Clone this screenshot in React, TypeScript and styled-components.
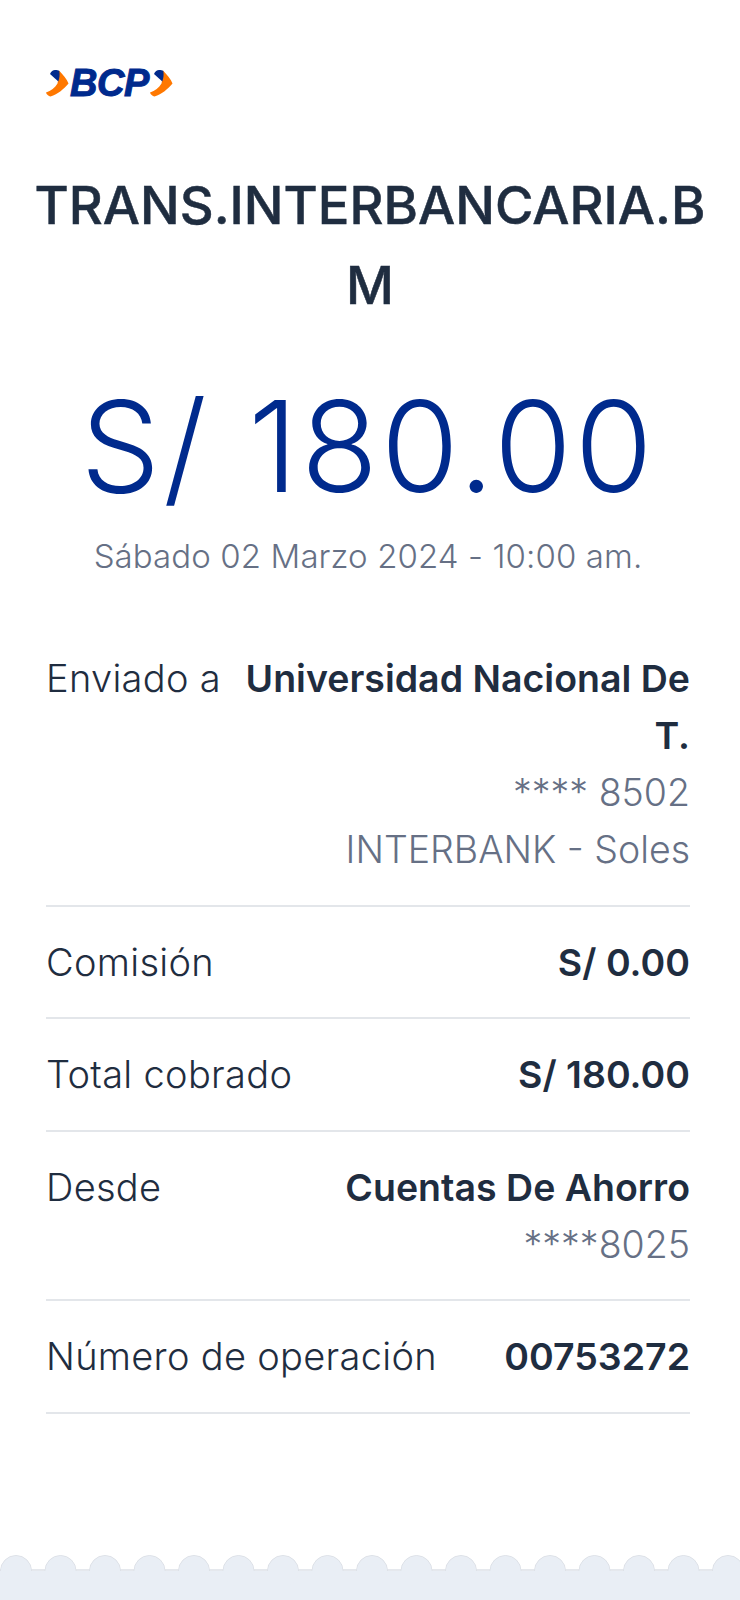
import React from 'react';
import styled, { createGlobalStyle } from 'styled-components';

const colors = {
  ink: '#1f2d40',
  muted: '#667085',
  blue: '#002a8d',
  orange: '#ff7800',
  line: '#e3e6ea',
  band: '#e9eef5',
  bandEdge: '#dde1e7',
};

const GlobalStyle = createGlobalStyle`
  html, body {
    margin: 0;
    padding: 0;
    background: #fff;
  }
  body {
    font-family: Inter, "Noto Sans", sans-serif;
  }
`;

const Page = styled.main`
  width: 740px;
  height: 1600px;
  display: flex;
  flex-direction: column;
  background: #fff;
  overflow: hidden;
`;

const Content = styled.div`
  flex: 1;
  display: flex;
  flex-direction: column;
  padding: 62px 50px 0 46px;
`;

const LogoRow = styled.div`
  display: flex;
  align-items: center;
  gap: 1px;
  height: 42px;
`;

const LogoText = styled.span`
  font-family: "Liberation Sans", sans-serif;
  font-size: 38px;
  font-weight: 700;
  font-style: italic;
  line-height: 42px;
  letter-spacing: -0.5px;
  color: ${colors.blue};
  -webkit-text-stroke: 1px ${colors.blue};
`;

const Title = styled.h1`
  margin: 61px -24px 0 -20px;
  font-size: 52.5px;
  font-weight: 500;
  line-height: 80px;
  text-align: center;
  color: ${colors.ink};
  -webkit-text-stroke: 0.5px ${colors.ink};
  overflow-wrap: anywhere;
`;

const Amount = styled.div`
  margin-top: 46px;
  font-size: 126px;
  font-weight: 300;
  line-height: 150px;
  letter-spacing: 3px;
  text-align: center;
  white-space: nowrap;
  color: ${colors.blue};
`;

const DateLine = styled.div`
  margin-top: 12px;
  font-size: 33px;
  font-weight: 300;
  line-height: 46px;
  letter-spacing: 0.1px;
  text-align: center;
  color: ${colors.muted};
`;

const Details = styled.section`
  margin-top: 44px;
  display: flex;
  flex-direction: column;
`;

const Row = styled.div`
  display: flex;
  justify-content: space-between;
  gap: 22px;
  padding: 27px 0 26.5px;
  border-bottom: 2px solid ${colors.line};
`;

const Label = styled.span`
  flex-shrink: 0;
  font-size: 38px;
  font-weight: 300;
  line-height: 57px;
  letter-spacing: 0.3px;
  color: ${colors.ink};
`;

const Values = styled.div`
  display: flex;
  flex-direction: column;
  text-align: right;
`;

const Strong = styled.span`
  font-size: 37.5px;
  font-weight: 600;
  line-height: 57px;
  color: ${colors.ink};
`;

const Sub = styled.span`
  font-size: 37.5px;
  font-weight: 300;
  line-height: 57px;
  color: ${colors.muted};
`;

const Band = styled.svg`
  display: block;
  flex-shrink: 0;
`;

const Chevron: React.FC = () => (
  <svg width="23" height="28" viewBox="0 0 23 28" aria-hidden="true">
    <path d="M13 1.5 C17 6 21 10 22.5 14.5 C18 20 12 25 4.5 27.5 C2.5 27 0.5 25.5 0 23.5 C5 22 9 18.5 11.5 14.5 C12.5 10 13 5 13 1.5 Z" fill={colors.orange} />
    <path d="M4 5 C5 2.5 7 1 9 1 C11 1 12.5 1.2 13.3 2 C14 6 13.5 9 12.3 12.5 C10 10 7 8 4 5 Z" fill={colors.blue} />
  </svg>
);

const ScallopBand: React.FC = () => {
  const centers = Array.from({ length: 18 }, (_, i) => 16 + i * 44.5);
  return (
    <Band width="740" height="45" viewBox="0 0 740 45" aria-hidden="true">
      <line x1="0" y1="15" x2="740" y2="15" stroke={colors.bandEdge} strokeWidth="1.5" />
      {centers.map((cx) => (
        <circle key={cx} cx={cx} cy="16" r="15.5" fill={colors.band} stroke={colors.bandEdge} strokeWidth="1" />
      ))}
      <rect x="0" y="16" width="740" height="29" fill={colors.band} />
      {centers.map((cx) => (
        <circle key={`fill-${cx}`} cx={cx} cy="16.5" r="15" fill={colors.band} />
      ))}
    </Band>
  );
};

export default function App() {
  return (
    <>
      <GlobalStyle />
      <Page>
        <Content>
          <LogoRow>
            <Chevron />
            <LogoText>BCP</LogoText>
            <Chevron />
          </LogoRow>
          <Title>TRANS.INTERBANCARIA.BM</Title>
          <Amount>S/ 180.00</Amount>
          <DateLine>Sábado 02 Marzo 2024 - 10:00 am.</DateLine>
          <Details>
            <Row>
              <Label>Enviado a</Label>
              <Values>
                <Strong>Universidad Nacional De T.</Strong>
                <Sub>**** 8502</Sub>
                <Sub>INTERBANK - Soles</Sub>
              </Values>
            </Row>
            <Row>
              <Label>Comisión</Label>
              <Values>
                <Strong>S/ 0.00</Strong>
              </Values>
            </Row>
            <Row>
              <Label>Total cobrado</Label>
              <Values>
                <Strong>S/ 180.00</Strong>
              </Values>
            </Row>
            <Row>
              <Label>Desde</Label>
              <Values>
                <Strong>Cuentas De Ahorro</Strong>
                <Sub>****8025</Sub>
              </Values>
            </Row>
            <Row>
              <Label>Número de operación</Label>
              <Values>
                <Strong>00753272</Strong>
              </Values>
            </Row>
          </Details>
        </Content>
        <ScallopBand />
      </Page>
    </>
  );
}
